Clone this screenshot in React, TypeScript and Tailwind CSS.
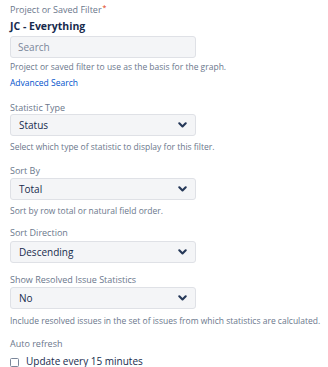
const font = { fontFamily: '"Open Sans", "Noto Sans", sans-serif' };

function Chevron() {
	return (
		<svg width="9" height="6" viewBox="0 0 9 6" className="shrink-0">
			<path
				d="M1.3 1.3 L4.5 4.5 L7.7 1.3"
				fill="none"
				stroke="#253858"
				strokeWidth="2.1"
				strokeLinecap="round"
				strokeLinejoin="round"
			/>
		</svg>
	);
}

function SelectBox({ value, className }: { value: string; className: string }) {
	return (
		<div
			className={`flex h-[22px] w-[186px] items-center justify-between rounded-[3px] border border-[#dfe1e6] bg-[#f4f5f7] pl-[8px] pr-[8px] text-[10px] text-[#172b4d] ${className}`}
		>
			<span>{value}</span>
			<Chevron />
		</div>
	);
}

function Label({ text, className }: { text: string; className: string }) {
	return (
		<div className={`text-[9px] leading-[12px] text-[#6b778c] ${className}`}>
			{text}
		</div>
	);
}

function Help({ text, className }: { text: string; className: string }) {
	return (
		<div className={`text-[8.5px] leading-[12px] text-[#6b778c] ${className}`}>
			{text}
		</div>
	);
}

export default function App() {
	return (
		<main className="min-h-screen bg-white pl-[10px] pt-[4px]" style={font}>
			<div className="text-[9px] leading-[12px] text-[#6b778c]">
				Project or Saved Filter
				<span className="relative top-[-3px] ml-[1px] text-[7px] leading-none text-[#de350b]">
					*
				</span>
			</div>
			<div className="mt-[3px] text-[10.5px] font-bold leading-[14px] text-[#172b4d]">
				JC - Everything
			</div>
			<div className="mt-[3px] flex h-[22px] w-[186px] items-center rounded-[3px] border border-[#dfe1e6] bg-[#f4f5f7] pl-[7px] text-[10px] text-[#7a869a]">
				Search
			</div>
			<Help
				text="Project or saved filter to use as the basis for the graph."
				className="mt-[3px]"
			/>
			<div className="mt-[4px] text-[8.5px] leading-[12px] text-[#0052cc]">
				Advanced Search
			</div>

			<Label text="Statistic Type" className="mt-[13px]" />
			<SelectBox value="Status" className="mt-0" />
			<Help
				text="Select which type of statistic to display for this filter."
				className="mt-[5px]"
			/>

			<Label text="Sort By" className="mt-[12px]" />
			<SelectBox value="Total" className="mt-[1px]" />
			<Help text="Sort by row total or natural field order." className="mt-[5px]" />

			<Label text="Sort Direction" className="mt-[10px]" />
			<SelectBox value="Descending" className="mt-[2px]" />

			<Label text="Show Resolved Issue Statistics" className="mt-[11px]" />
			<SelectBox value="No" className="mt-[1px]" />
			<Help
				text="Include resolved issues in the set of issues from which statistics are calculated."
				className="mt-[6px]"
			/>

			<Label text="Auto refresh" className="mt-[11px]" />
			<label className="mt-[4px] flex items-center gap-[7px] text-[10px] leading-[14px] text-[#172b4d]">
				<span className="mt-[2px] block h-[9px] w-[9px] rounded-[1.5px] border border-[#7a869a] bg-white" />
				Update every 15 minutes
			</label>
		</main>
	);
}
